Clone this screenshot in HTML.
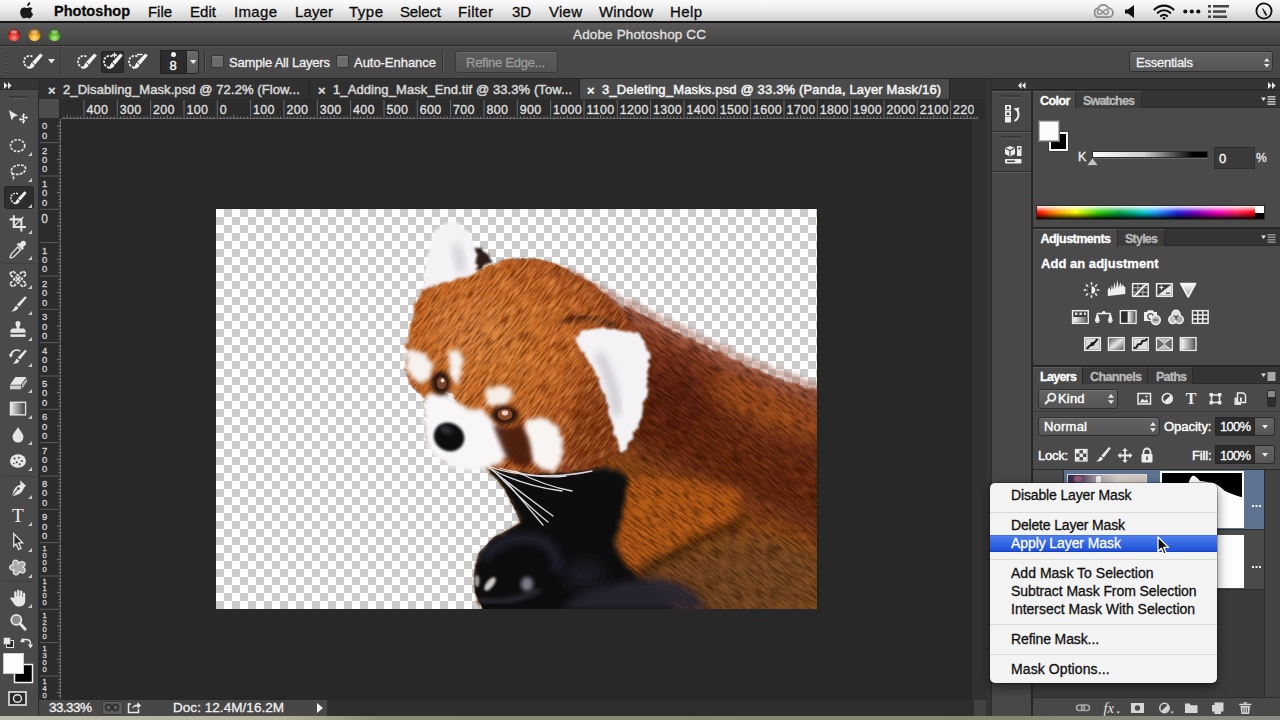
<!DOCTYPE html>
<html lang="en">
<head>
<meta charset="utf-8">
<title>Adobe Photoshop CC</title>
<style>
*{box-sizing:border-box;margin:0;padding:0}
html,body{width:1280px;height:720px;overflow:hidden;background:#282828}
body{font-family:"Liberation Sans","DejaVu Sans",sans-serif;font-size:12px;color:#e8e8e8;position:relative}
.a{position:absolute}
.t{position:absolute;white-space:pre;line-height:1;-webkit-text-stroke-width:.3px}
svg{position:absolute;overflow:visible}
#menubar{left:0;top:0;width:1280px;height:22px;background:linear-gradient(#fbfbfb 0%,#ececec 45%,#d2d2d2 90%,#b4b4b4 100%)}
#menubar .t{color:#0c0c0c}
#titlebar{left:0;top:21px;width:1280px;height:25px;background:linear-gradient(#5a5a5a,#434343);border-top:2px solid #161616;border-bottom:1px solid #2a2a2a}
#optbar{left:0;top:46px;width:1280px;height:33px;background:#484848;border-top:1px solid #565656;border-bottom:1px solid #262626}
#tabbar{left:39px;top:79px;width:947px;height:20px;background:#303030}
#hruler{left:39px;top:99px;width:947px;height:20px;background:#2c2c2c}
#vruler{left:39px;top:119px;width:22px;height:581px;background:#2c2c2c}
#canvas{left:61px;top:119px;width:925px;height:597px;background:#282828}
#statusbar{left:39px;top:700px;width:288px;height:16px;background:#474747}
#toolbar{left:0;top:79px;width:38px;height:637px;background:#4a4a4a}
#rightbg{left:986px;top:79px;width:294px;height:637px;background:#2c2c2c}
#dock{left:992px;top:91px;width:39px;height:625px;background:#484848}
#deskstrip{left:0;top:716px;width:1280px;height:4px;background:linear-gradient(90deg,#bcbcae 0,#b2b29e 22%,#8a8b74 30%,#86876f 75%,#8c8c86 100%)}
.chk{position:absolute;width:13px;height:13px;background:#6b6b6b;border:1px solid #353535;border-radius:2px;box-shadow:inset 0 1px 0 #7c7c7c}
.ptab{position:absolute;height:17px;border-right:1px solid #2a2a2a}
.phead{position:absolute;left:1033px;width:247px;height:17px;background:#343434;border-bottom:1px solid #2a2a2a}
.pbody{position:absolute;left:1033px;width:247px;background:#4a4a4a}
.dd{position:absolute;border:1px solid #2f2f2f;border-radius:3px;background:linear-gradient(#626262,#555);box-shadow:inset 0 1px 0 #727272}
.numbox{position:absolute;background:#2c2c2c;border:1px solid #262626}
.ddbtn{position:absolute;background:linear-gradient(#646464,#565656);border:1px solid #2c2c2c;border-left:none;border-radius:0 3px 3px 0}
</style>
</head>
<body>
<div id="menubar" class="a">
  <svg style="left:20px;top:2px" width="15" height="18" viewBox="0 0 15 18"><path d="M10.3 0.2c.1 1.1-.3 2-.9 2.700-.6.700-1.500 1.200-2.400 1.100-.1-1 .4-2 1-2.600.6-.700 1.600-1.200 2.300-1.200zM12.700 6.300c-.9.600-1.500 1.500-1.500 2.700 0 1.400.800 2.500 2 3-.3.900-.8 1.800-1.400 2.600-.7.900-1.400 1.800-2.500 1.800s-1.400-.6-2.600-.6-1.600.6-2.600.6c-1.100 0-1.900-1-2.600-1.900C.3 12.600-.5 9.400.9 7.200c.7-1.100 1.900-1.800 3.200-1.800 1.100 0 2.100.7 2.800.7.600 0 1.900-.8 3.200-.7 1 .0 2 .4 2.600 1.200z" fill="#1a1a1a"/></svg>
  <span class="t" style="left:54px;top:3.9px;font-size:14.5px;letter-spacing:0.04px;font-weight:bold;">Photoshop</span>
  <span class="t" style="left:148px;top:3.7px;font-size:15px;letter-spacing:-0.06px;">File</span>
  <span class="t" style="left:190px;top:3.7px;font-size:15px;letter-spacing:0.05px;">Edit</span>
  <span class="t" style="left:234px;top:3.7px;font-size:15px;letter-spacing:0.32px;">Image</span>
  <span class="t" style="left:295px;top:3.7px;font-size:15px;letter-spacing:0.12px;">Layer</span>
  <span class="t" style="left:349px;top:3.7px;font-size:15px;letter-spacing:0.49px;">Type</span>
  <span class="t" style="left:400px;top:3.7px;font-size:15px;letter-spacing:-0.14px;">Select</span>
  <span class="t" style="left:458px;top:3.7px;font-size:15px;letter-spacing:0.33px;">Filter</span>
  <span class="t" style="left:512px;top:3.7px;font-size:15px;letter-spacing:-0.19px;">3D</span>
  <span class="t" style="left:549px;top:3.7px;font-size:15px;letter-spacing:0.25px;">View</span>
  <span class="t" style="left:599px;top:3.7px;font-size:15px;letter-spacing:0.13px;">Window</span>
  <span class="t" style="left:670px;top:3.7px;font-size:15px;letter-spacing:0.38px;">Help</span>
  <!-- right status icons -->
  <svg style="left:1093px;top:4px" width="21" height="15" viewBox="0 0 21 15" fill="none" stroke="#8c8c8c"><path d="M5.800 13.200a4.600 4.600 0 0 1-.6-9.100C6.200 1.900 8.200.8 10.400.8c2.300 0 4.200 1.300 5 3.300 2.600.2 4.600 2.200 4.600 4.700 0 2.400-2 4.400-4.500 4.400z" stroke-width="1.700"/><path d="M6.300 10.300a2.400 2.400 0 0 1 0-4.700c1.500 0 2.300.9 3.500 2.300s2.200 2.400 3.700 2.400a2.400 2.400 0 0 0 0-4.700c-1.500 0-2.400.9-3.700 2.400S7.800 10.300 6.300 10.300z" stroke-width="1.500"/></svg>
  <svg style="left:1125px;top:5px" width="10" height="13" viewBox="0 0 10 13"><path d="M0 4.500h3L9 0v13L3 8.500H0z" fill="#111"/></svg>
  <svg style="left:1153px;top:4px" width="22" height="16" viewBox="0 0 22 16" fill="none" stroke="#111" stroke-width="2.200" stroke-linecap="round"><path d="M1.500 5.500a13.500 13.500 0 0 1 19 0"/><path d="M4.800 8.800a8.800 8.800 0 0 1 12.400 0"/><path d="M8 12a4.300 4.300 0 0 1 6 0"/><circle cx="11" cy="14.300" r="0.900" fill="#111" stroke-width="1"/></svg>
  <svg style="left:1183px;top:9px" width="18" height="5" viewBox="0 0 18 5" fill="#111"><circle cx="2.300" cy="2.500" r="2.100"/><circle cx="8.800" cy="2.500" r="2.100"/><circle cx="15.300" cy="2.500" r="2.100"/></svg>
  <svg style="left:1208px;top:4px" width="22" height="15" viewBox="0 0 22 15" fill="#444"><rect x="0" y="1" width="3" height="2.500"/><rect x="5" y="1" width="16" height="2.500"/><rect x="0" y="6.300" width="3" height="2.500"/><rect x="5" y="6.300" width="13" height="2.500"/><rect x="0" y="11.500" width="3" height="2.500"/><rect x="5" y="11.500" width="14" height="2.500"/></svg>
  <svg style="left:1255px;top:2px" width="18" height="18" viewBox="0 0 18 18" fill="none" stroke="#111"><circle cx="9" cy="9" r="7.600" stroke-width="1.800"/><path d="M9 9l2.500 4.500" stroke-width="1.600"/><path d="M9 9L7.500 6.500" stroke-width="1.200"/></svg>
</div>
<div id="titlebar" class="a"></div>
<svg style="left:6px;top:27px" width="60" height="16" viewBox="0 0 60 16">
  <defs>
    <radialGradient id="tlr" cx="50%" cy="75%" r="60%"><stop offset="0" stop-color="#ff8a80"/><stop offset="0.600" stop-color="#e0352b"/><stop offset="1" stop-color="#8e1812"/></radialGradient>
    <radialGradient id="tly" cx="50%" cy="75%" r="60%"><stop offset="0" stop-color="#ffe48a"/><stop offset="0.600" stop-color="#e9a322"/><stop offset="1" stop-color="#94600c"/></radialGradient>
    <radialGradient id="tlg" cx="50%" cy="75%" r="60%"><stop offset="0" stop-color="#b6f08a"/><stop offset="0.600" stop-color="#5bb52e"/><stop offset="1" stop-color="#2c6a12"/></radialGradient>
  </defs>
  <circle cx="8" cy="8" r="6.200" fill="url(#tlr)"/><circle cx="28.500" cy="8" r="6.200" fill="url(#tly)"/><circle cx="48.500" cy="8" r="6.200" fill="url(#tlg)"/>
  <ellipse cx="8" cy="4.800" rx="3.500" ry="1.800" fill="#fff" opacity=".45"/><ellipse cx="28.500" cy="4.800" rx="3.500" ry="1.800" fill="#fff" opacity=".45"/><ellipse cx="48.500" cy="4.800" rx="3.500" ry="1.800" fill="#fff" opacity=".45"/>
</svg>
<span class="t" style="left:573px;top:28.4px;font-size:13.5px;letter-spacing:0.14px;color:#e2e2e2;">Adobe Photoshop CC</span>
<div id="optbar" class="a"></div>
<!-- options bar content -->
<div class="a" style="left:5px;top:52px;width:3px;height:21px;background:repeating-linear-gradient(#3a3a3a 0 1px,#585858 1px 2px)"></div>
<svg style="left:21px;top:51px" width="24" height="22" viewBox="0 0 24 22"><g id="qs"><path d="M11.500 5.500C8 3.800 3 5.800 3 10.500c0 3.500 2.300 5.800 5.200 6" fill="none" stroke="#ececec" stroke-width="1.700" stroke-dasharray="2.400 1.200"/><path d="M19.300 2.600l2.500 2-7.600 8.800-3-2.300z" fill="#f4f4f4"/><path d="M10.600 11.600l3.100 2.400c-.9 2.600-3.600 4.300-7.200 3.700 2-1 2.700-3.700 4.100-6.100z" fill="#f4f4f4"/></g></svg>
<svg style="left:48px;top:59px" width="7" height="5" viewBox="0 0 7 5"><path d="M0 0h7L3.500 4.500z" fill="#e8e8e8"/></svg>
<div class="a" style="left:60px;top:50px;width:2px;height:24px;background:linear-gradient(90deg,#3a3a3a 50%,#525252 50%)"></div>
<svg style="left:75px;top:51px" width="24" height="22" viewBox="0 0 24 22"><use href="#qs"/></svg>
<div class="a" style="left:101px;top:51px;width:23px;height:22px;background:#2d2d2d;border:1px solid #242424;border-radius:2px"></div>
<svg style="left:101px;top:51px" width="24" height="22" viewBox="0 0 24 22"><use href="#qs"/><path d="M13.500 1.500v5M11 4h5" stroke="#f0f0f0" stroke-width="1.300"/></svg>
<svg style="left:126px;top:51px" width="24" height="22" viewBox="0 0 24 22"><use href="#qs"/><path d="M11 3.500h5.500" stroke="#f0f0f0" stroke-width="1.400"/></svg>
<div class="a" style="left:160px;top:50px;width:27px;height:24px;background:#2c2c2c;border:1px solid #222"></div>
<div class="a" style="left:171px;top:52px;width:5px;height:5px;border-radius:3px;background:#f2f2f2"></div>
<span class="t" style="left:169.5px;top:59.1px;font-size:13px;letter-spacing:0.77px;color:#ffffff;">8</span>
<div class="a" style="left:187px;top:50px;width:12px;height:24px;background:linear-gradient(#6a6a6a,#585858);border:1px solid #262626;border-left:none;border-radius:0 3px 3px 0"></div>
<svg style="left:190px;top:60px" width="7" height="5" viewBox="0 0 7 5"><path d="M0 0h6.500L3.250 4z" fill="#ededed"/></svg>
<div class="a" style="left:204px;top:50px;width:2px;height:24px;background:linear-gradient(90deg,#333 50%,#575757 50%)"></div>
<div class="chk" style="left:211px;top:55px"></div>
<span class="t" style="left:229px;top:55.6px;font-size:13px;letter-spacing:-0.19px;color:#f0f0f0;">Sample All Layers</span>
<div class="chk" style="left:336px;top:55px"></div>
<span class="t" style="left:354px;top:55.6px;font-size:13px;letter-spacing:-0.04px;color:#f0f0f0;">Auto-Enhance</span>
<div class="a" style="left:442px;top:50px;width:2px;height:24px;background:linear-gradient(90deg,#333 50%,#575757 50%)"></div>
<div class="a" style="left:455px;top:51px;width:103px;height:22px;background:linear-gradient(#5c5c5c,#525252);border:1px solid #3a3a3a;border-radius:3px;box-shadow:inset 0 1px 0 #6a6a6a"></div>
<span class="t" style="left:466px;top:55.6px;font-size:13px;letter-spacing:-0.26px;color:#9c9c9c;">Refine Edge...</span>
<div class="dd" style="left:1129px;top:51px;width:144px;height:21px"></div>
<span class="t" style="left:1136px;top:55.6px;font-size:13px;letter-spacing:-0.25px;color:#f2f2f2;">Essentials</span>
<svg style="left:1263.500px;top:57.500px" width="5.500" height="9.500" viewBox="0 0 7 12" fill="#e8e8e8"><path d="M3.500 0L7 4.500H0zM3.500 12L0 7.500h7z"/></svg>
<div id="rightbg" class="a"></div>
<div id="tabbar" class="a"></div>
<div class="a" style="left:579px;top:79px;width:371px;height:20px;background:#4a4a4a;border-left:1px solid #262626;border-right:1px solid #262626"></div>
<div class="a" style="left:309px;top:81px;width:1px;height:16px;background:#222"></div>
<span class="t" style="left:48px;top:83.6px;font-size:13px;letter-spacing:0.41px;font-weight:bold;color:#dcdcdc;">×</span><span class="t" style="left:63px;top:83.1px;font-size:13px;letter-spacing:0.09px;color:#d6d6d6;-webkit-text-stroke-width:.5px">2_Disabling_Mask.psd @ 72.2% (Flow...</span>
<span class="t" style="left:318px;top:83.6px;font-size:13px;letter-spacing:0.41px;font-weight:bold;color:#dcdcdc;">×</span><span class="t" style="left:333px;top:83.1px;font-size:13px;letter-spacing:0.09px;color:#d6d6d6;-webkit-text-stroke-width:.5px">1_Adding_Mask_End.tif @ 33.3% (Tow...</span>
<span class="t" style="left:587px;top:83.6px;font-size:13px;letter-spacing:0.41px;font-weight:bold;color:#f4f4f4;">×</span><span class="t" style="left:602px;top:83.1px;font-size:13px;letter-spacing:0.16px;color:#f4f4f4;-webkit-text-stroke-width:.5px">3_Deleting_Masks.psd @ 33.3% (Panda, Layer Mask/16)</span>
<div id="hruler" class="a"></div>
<div id="vruler" class="a"></div>
<div class="a" style="left:39px;top:99px;width:21px;height:20px;background:#4c4c4c;border-right:1px solid #2a2a2a;border-bottom:1px solid #2a2a2a"></div>
<div class="a" style="left:61px;top:118px;width:917px;height:1px;background:#646464"></div><div class="a" style="left:60px;top:119px;width:1px;height:580px;background:#646464"></div>
<svg style="left:0;top:0" width="1280" height="720" viewBox="0 0 1280 720">
<g font-family="'Liberation Sans','DejaVu Sans',sans-serif" font-size="12.5" fill="#dedede" stroke="#dedede" stroke-width=".35" letter-spacing="0.3">
<text x="86.5" y="113.500" clip-path="url(#hclip)">400</text>
<text x="119.8" y="113.500" clip-path="url(#hclip)">300</text>
<text x="153.1" y="113.500" clip-path="url(#hclip)">200</text>
<text x="186.5" y="113.500" clip-path="url(#hclip)">100</text>
<text x="219.8" y="113.500" clip-path="url(#hclip)">0</text>
<text x="253.1" y="113.500" clip-path="url(#hclip)">100</text>
<text x="286.5" y="113.500" clip-path="url(#hclip)">200</text>
<text x="319.8" y="113.500" clip-path="url(#hclip)">300</text>
<text x="353.1" y="113.500" clip-path="url(#hclip)">400</text>
<text x="386.5" y="113.500" clip-path="url(#hclip)">500</text>
<text x="419.8" y="113.500" clip-path="url(#hclip)">600</text>
<text x="453.1" y="113.500" clip-path="url(#hclip)">700</text>
<text x="486.5" y="113.500" clip-path="url(#hclip)">800</text>
<text x="519.8" y="113.500" clip-path="url(#hclip)">900</text>
<text x="553.1" y="113.500" clip-path="url(#hclip)">1000</text>
<text x="586.5" y="113.500" clip-path="url(#hclip)">1100</text>
<text x="619.8" y="113.500" clip-path="url(#hclip)">1200</text>
<text x="653.1" y="113.500" clip-path="url(#hclip)">1300</text>
<text x="686.5" y="113.500" clip-path="url(#hclip)">1400</text>
<text x="719.8" y="113.500" clip-path="url(#hclip)">1500</text>
<text x="753.1" y="113.500" clip-path="url(#hclip)">1600</text>
<text x="786.5" y="113.500" clip-path="url(#hclip)">1700</text>
<text x="819.8" y="113.500" clip-path="url(#hclip)">1800</text>
<text x="853.1" y="113.500" clip-path="url(#hclip)">1900</text>
<text x="886.5" y="113.500" clip-path="url(#hclip)">2000</text>
<text x="919.8" y="113.500" clip-path="url(#hclip)">2100</text>
<text x="953.1" y="113.500" clip-path="url(#hclip)">2200</text>
</g>
<defs><clipPath id="hclip"><rect x="61" y="99" width="912.800" height="20"/></clipPath></defs>
<path d="M84.0 100V119M117.3 100V119M150.6 100V119M184.0 100V119M217.3 100V119M250.6 100V119M284.0 100V119M317.3 100V119M350.6 100V119M384.0 100V119M417.3 100V119M450.6 100V119M484.0 100V119M517.3 100V119M550.6 100V119M584.0 100V119M617.3 100V119M650.6 100V119M684.0 100V119M717.3 100V119M750.6 100V119M784.0 100V119M817.3 100V119M850.6 100V119M884.0 100V119M917.3 100V119M950.6 100V119" stroke="#6a6a6a" stroke-width="1" fill="none"/>
<path d="M64.0 116.5V119M67.3 115.0V119M70.6 116.5V119M74.0 116.5V119M77.3 116.5V119M80.6 116.5V119M87.3 116.5V119M90.6 116.5V119M94.0 116.5V119M97.3 116.5V119M100.6 115.0V119M104.0 116.5V119M107.3 116.5V119M110.6 116.5V119M114.0 116.5V119M120.6 116.5V119M124.0 116.5V119M127.3 116.5V119M130.6 116.5V119M134.0 115.0V119M137.3 116.5V119M140.6 116.5V119M144.0 116.5V119M147.3 116.5V119M154.0 116.5V119M157.3 116.5V119M160.6 116.5V119M164.0 116.5V119M167.3 115.0V119M170.6 116.5V119M174.0 116.5V119M177.3 116.5V119M180.6 116.5V119M187.3 116.5V119M190.6 116.5V119M194.0 116.5V119M197.3 116.5V119M200.6 115.0V119M204.0 116.5V119M207.3 116.5V119M210.6 116.5V119M214.0 116.5V119M220.6 116.5V119M224.0 116.5V119M227.3 116.5V119M230.6 116.5V119M234.0 115.0V119M237.3 116.5V119M240.6 116.5V119M244.0 116.5V119M247.3 116.5V119M254.0 116.5V119M257.3 116.5V119M260.6 116.5V119M264.0 116.5V119M267.3 115.0V119M270.6 116.5V119M274.0 116.5V119M277.3 116.5V119M280.6 116.5V119M287.3 116.5V119M290.6 116.5V119M294.0 116.5V119M297.3 116.5V119M300.6 115.0V119M304.0 116.5V119M307.3 116.5V119M310.6 116.5V119M314.0 116.5V119M320.6 116.5V119M324.0 116.5V119M327.3 116.5V119M330.6 116.5V119M334.0 115.0V119M337.3 116.5V119M340.6 116.5V119M344.0 116.5V119M347.3 116.5V119M354.0 116.5V119M357.3 116.5V119M360.6 116.5V119M364.0 116.5V119M367.3 115.0V119M370.6 116.5V119M374.0 116.5V119M377.3 116.5V119M380.6 116.5V119M387.3 116.5V119M390.6 116.5V119M394.0 116.5V119M397.3 116.5V119M400.6 115.0V119M404.0 116.5V119M407.3 116.5V119M410.6 116.5V119M414.0 116.5V119M420.6 116.5V119M424.0 116.5V119M427.3 116.5V119M430.6 116.5V119M434.0 115.0V119M437.3 116.5V119M440.6 116.5V119M444.0 116.5V119M447.3 116.5V119M454.0 116.5V119M457.3 116.5V119M460.6 116.5V119M464.0 116.5V119M467.3 115.0V119M470.6 116.5V119M474.0 116.5V119M477.3 116.5V119M480.6 116.5V119M487.3 116.5V119M490.6 116.5V119M494.0 116.5V119M497.3 116.5V119M500.6 115.0V119M504.0 116.5V119M507.3 116.5V119M510.6 116.5V119M514.0 116.5V119M520.6 116.5V119M524.0 116.5V119M527.3 116.5V119M530.6 116.5V119M534.0 115.0V119M537.3 116.5V119M540.6 116.5V119M544.0 116.5V119M547.3 116.5V119M554.0 116.5V119M557.3 116.5V119M560.6 116.5V119M564.0 116.5V119M567.3 115.0V119M570.6 116.5V119M574.0 116.5V119M577.3 116.5V119M580.6 116.5V119M587.3 116.5V119M590.6 116.5V119M594.0 116.5V119M597.3 116.5V119M600.6 115.0V119M604.0 116.5V119M607.3 116.5V119M610.6 116.5V119M614.0 116.5V119M620.6 116.5V119M624.0 116.5V119M627.3 116.5V119M630.6 116.5V119M634.0 115.0V119M637.3 116.5V119M640.6 116.5V119M644.0 116.5V119M647.3 116.5V119M654.0 116.5V119M657.3 116.5V119M660.6 116.5V119M664.0 116.5V119M667.3 115.0V119M670.6 116.5V119M674.0 116.5V119M677.3 116.5V119M680.6 116.5V119M687.3 116.5V119M690.6 116.5V119M694.0 116.5V119M697.3 116.5V119M700.6 115.0V119M704.0 116.5V119M707.3 116.5V119M710.6 116.5V119M714.0 116.5V119M720.6 116.5V119M724.0 116.5V119M727.3 116.5V119M730.6 116.5V119M734.0 115.0V119M737.3 116.5V119M740.6 116.5V119M744.0 116.5V119M747.3 116.5V119M754.0 116.5V119M757.3 116.5V119M760.6 116.5V119M764.0 116.5V119M767.3 115.0V119M770.6 116.5V119M774.0 116.5V119M777.3 116.5V119M780.6 116.5V119M787.3 116.5V119M790.6 116.5V119M794.0 116.5V119M797.3 116.5V119M800.6 115.0V119M804.0 116.5V119M807.3 116.5V119M810.6 116.5V119M814.0 116.5V119M820.6 116.5V119M824.0 116.5V119M827.3 116.5V119M830.6 116.5V119M834.0 115.0V119M837.3 116.5V119M840.6 116.5V119M844.0 116.5V119M847.3 116.5V119M854.0 116.5V119M857.3 116.5V119M860.6 116.5V119M864.0 116.5V119M867.3 115.0V119M870.6 116.5V119M874.0 116.5V119M877.3 116.5V119M880.6 116.5V119M887.3 116.5V119M890.6 116.5V119M894.0 116.5V119M897.3 116.5V119M900.6 115.0V119M904.0 116.5V119M907.3 116.5V119M910.6 116.5V119M914.0 116.5V119M920.6 116.5V119M924.0 116.5V119M927.3 116.5V119M930.6 116.5V119M934.0 115.0V119M937.3 116.5V119M940.6 116.5V119M944.0 116.5V119M947.3 116.5V119M954.0 116.5V119M957.3 116.5V119M960.6 116.5V119M964.0 116.5V119M967.3 115.0V119M970.6 116.5V119M974.0 116.5V119M977.3 116.5V119" stroke="#7c7c7c" stroke-width="1" fill="none"/>
<g font-family="'Liberation Sans','DejaVu Sans',sans-serif" font-size="9.500" fill="#d4d4d4" stroke="#d4d4d4" stroke-width=".3" text-anchor="middle">
<text x="44.700" y="153.7" font-size="9.5">2</text>
<text x="44.700" y="163.0" font-size="9.5">0</text>
<text x="44.700" y="172.3" font-size="9.5">0</text>
<text x="44.700" y="187.1" font-size="9.5">1</text>
<text x="44.700" y="196.4" font-size="9.5">0</text>
<text x="44.700" y="205.7" font-size="9.5">0</text>
<text x="44.700" y="223.1" font-size="12">0</text>
<text x="44.700" y="253.7" font-size="9.5">1</text>
<text x="44.700" y="263.0" font-size="9.5">0</text>
<text x="44.700" y="272.3" font-size="9.5">0</text>
<text x="44.700" y="287.1" font-size="9.5">2</text>
<text x="44.700" y="296.4" font-size="9.5">0</text>
<text x="44.700" y="305.7" font-size="9.5">0</text>
<text x="44.700" y="320.4" font-size="9.5">3</text>
<text x="44.700" y="329.7" font-size="9.5">0</text>
<text x="44.700" y="339.0" font-size="9.5">0</text>
<text x="44.700" y="353.7" font-size="9.5">4</text>
<text x="44.700" y="363.0" font-size="9.5">0</text>
<text x="44.700" y="372.3" font-size="9.5">0</text>
<text x="44.700" y="387.1" font-size="9.5">5</text>
<text x="44.700" y="396.4" font-size="9.5">0</text>
<text x="44.700" y="405.7" font-size="9.5">0</text>
<text x="44.700" y="420.4" font-size="9.5">6</text>
<text x="44.700" y="429.7" font-size="9.5">0</text>
<text x="44.700" y="439.0" font-size="9.5">0</text>
<text x="44.700" y="453.7" font-size="9.5">7</text>
<text x="44.700" y="463.0" font-size="9.5">0</text>
<text x="44.700" y="472.3" font-size="9.5">0</text>
<text x="44.700" y="487.1" font-size="9.5">8</text>
<text x="44.700" y="496.4" font-size="9.5">0</text>
<text x="44.700" y="505.7" font-size="9.5">0</text>
<text x="44.700" y="520.4" font-size="9.5">9</text>
<text x="44.700" y="529.7" font-size="9.5">0</text>
<text x="44.700" y="539.0" font-size="9.5">0</text>
<text x="44.700" y="550.8" font-size="7.5">1</text>
<text x="44.700" y="557.8" font-size="7.5">0</text>
<text x="44.700" y="564.8" font-size="7.5">0</text>
<text x="44.700" y="571.8" font-size="7.5">0</text>
<text x="44.700" y="584.1" font-size="7.5">1</text>
<text x="44.700" y="591.1" font-size="7.5">1</text>
<text x="44.700" y="598.1" font-size="7.5">0</text>
<text x="44.700" y="605.1" font-size="7.5">0</text>
<text x="44.700" y="617.5" font-size="7.5">1</text>
<text x="44.700" y="624.5" font-size="7.5">2</text>
<text x="44.700" y="631.5" font-size="7.5">0</text>
<text x="44.700" y="638.5" font-size="7.5">0</text>
<text x="44.700" y="650.8" font-size="7.5">1</text>
<text x="44.700" y="657.8" font-size="7.5">3</text>
<text x="44.700" y="664.8" font-size="7.5">0</text>
<text x="44.700" y="671.8" font-size="7.5">0</text>
<text x="44.700" y="684.1" font-size="7.5">1</text>
<text x="44.700" y="691.1" font-size="7.5">4</text>
<text x="44.700" y="698.1" font-size="7.5">0</text>
<text x="44.700" y="129.1" font-size="9.500">0</text>
<text x="44.700" y="138.6" font-size="9.500">0</text>
</g>
<path d="M40 142.6H61M40 176.0H61M40 209.3H61M40 242.6H61M40 276.0H61M40 309.3H61M40 342.6H61M40 376.0H61M40 409.3H61M40 442.6H61M40 476.0H61M40 509.3H61M40 542.6H61M40 576.0H61M40 609.3H61M40 642.6H61M40 676.0H61" stroke="#5c5c5c" stroke-width="1" fill="none"/>
<path d="M58.5 122.6H61M57.0 126.0H61M58.5 129.3H61M58.5 132.6H61M58.5 136.0H61M58.5 139.3H61M58.5 146.0H61M58.5 149.3H61M58.5 152.6H61M58.5 156.0H61M57.0 159.3H61M58.5 162.6H61M58.5 166.0H61M58.5 169.3H61M58.5 172.6H61M58.5 179.3H61M58.5 182.6H61M58.5 186.0H61M58.5 189.3H61M57.0 192.6H61M58.5 196.0H61M58.5 199.3H61M58.5 202.6H61M58.5 206.0H61M58.5 212.6H61M58.5 216.0H61M58.5 219.3H61M58.5 222.6H61M57.0 226.0H61M58.5 229.3H61M58.5 232.6H61M58.5 236.0H61M58.5 239.3H61M58.5 246.0H61M58.5 249.3H61M58.5 252.6H61M58.5 256.0H61M57.0 259.3H61M58.5 262.6H61M58.5 266.0H61M58.5 269.3H61M58.5 272.6H61M58.5 279.3H61M58.5 282.6H61M58.5 286.0H61M58.5 289.3H61M57.0 292.6H61M58.5 296.0H61M58.5 299.3H61M58.5 302.6H61M58.5 306.0H61M58.5 312.6H61M58.5 316.0H61M58.5 319.3H61M58.5 322.6H61M57.0 326.0H61M58.5 329.3H61M58.5 332.6H61M58.5 336.0H61M58.5 339.3H61M58.5 346.0H61M58.5 349.3H61M58.5 352.6H61M58.5 356.0H61M57.0 359.3H61M58.5 362.6H61M58.5 366.0H61M58.5 369.3H61M58.5 372.6H61M58.5 379.3H61M58.5 382.6H61M58.5 386.0H61M58.5 389.3H61M57.0 392.6H61M58.5 396.0H61M58.5 399.3H61M58.5 402.6H61M58.5 406.0H61M58.5 412.6H61M58.5 416.0H61M58.5 419.3H61M58.5 422.6H61M57.0 426.0H61M58.5 429.3H61M58.5 432.6H61M58.5 436.0H61M58.5 439.3H61M58.5 446.0H61M58.5 449.3H61M58.5 452.6H61M58.5 456.0H61M57.0 459.3H61M58.5 462.6H61M58.5 466.0H61M58.5 469.3H61M58.5 472.6H61M58.5 479.3H61M58.5 482.6H61M58.5 486.0H61M58.5 489.3H61M57.0 492.6H61M58.5 496.0H61M58.5 499.3H61M58.5 502.6H61M58.5 506.0H61M58.5 512.6H61M58.5 516.0H61M58.5 519.3H61M58.5 522.6H61M57.0 526.0H61M58.5 529.3H61M58.5 532.6H61M58.5 536.0H61M58.5 539.3H61M58.5 546.0H61M58.5 549.3H61M58.5 552.6H61M58.5 556.0H61M57.0 559.3H61M58.5 562.6H61M58.5 566.0H61M58.5 569.3H61M58.5 572.6H61M58.5 579.3H61M58.5 582.6H61M58.5 586.0H61M58.5 589.3H61M57.0 592.6H61M58.5 596.0H61M58.5 599.3H61M58.5 602.6H61M58.5 606.0H61M58.5 612.6H61M58.5 616.0H61M58.5 619.3H61M58.5 622.6H61M57.0 626.0H61M58.5 629.3H61M58.5 632.6H61M58.5 636.0H61M58.5 639.3H61M58.5 646.0H61M58.5 649.3H61M58.5 652.6H61M58.5 656.0H61M57.0 659.3H61M58.5 662.6H61M58.5 666.0H61M58.5 669.3H61M58.5 672.6H61M58.5 679.3H61M58.5 682.6H61M58.5 686.0H61M58.5 689.3H61M57.0 692.6H61M58.5 696.0H61" stroke="#7c7c7c" stroke-width="1" fill="none"/>
</svg>
<div id="canvas" class="a"></div>
<div class="a" style="left:972px;top:119px;width:14px;height:581px;background:#313131"></div><div class="a" style="left:327px;top:700px;width:647px;height:16px;background:#2e2e2e"></div><div class="a" style="left:974px;top:700px;width:12px;height:16px;background:#424242"></div>
<svg id="img" style="left:216px;top:209px;overflow:hidden" width="601" height="400" viewBox="216 209 601 400">
<defs>
<pattern id="chk" x="216" y="209" width="16" height="16" patternUnits="userSpaceOnUse"><rect width="16" height="16" fill="#fefefe"/><rect x="8" width="8" height="8" fill="#cbcbcb"/><rect y="8" width="8" height="8" fill="#cbcbcb"/></pattern>
<filter id="fur" x="-5%" y="-5%" width="110%" height="110%"><feTurbulence type="fractalNoise" baseFrequency="0.11" numOctaves="2" seed="7" result="n"/><feDisplacementMap in="SourceGraphic" in2="n" scale="8" xChannelSelector="R" yChannelSelector="G"/><feGaussianBlur stdDeviation="0.8"/></filter>
<filter id="fur2" x="-10%" y="-10%" width="120%" height="120%"><feTurbulence type="fractalNoise" baseFrequency="0.14" numOctaves="2" seed="3" result="n"/><feDisplacementMap in="SourceGraphic" in2="n" scale="8" xChannelSelector="R" yChannelSelector="G"/><feGaussianBlur stdDeviation="1.9"/></filter>
<filter id="b1" x="-20%" y="-20%" width="140%" height="140%"><feGaussianBlur stdDeviation="1"/></filter>
<filter id="b2" x="-20%" y="-20%" width="140%" height="140%"><feGaussianBlur stdDeviation="2"/></filter>
<filter id="b4" x="-30%" y="-30%" width="160%" height="160%"><feGaussianBlur stdDeviation="4"/></filter>
<filter id="b8" x="-40%" y="-40%" width="180%" height="180%"><feGaussianBlur stdDeviation="8"/></filter>
<filter id="b14" x="-50%" y="-50%" width="200%" height="200%"><feGaussianBlur stdDeviation="14"/></filter>
<filter id="tex" x="0" y="0" width="100%" height="100%"><feTurbulence type="fractalNoise" baseFrequency="0.07 0.5" numOctaves="3" seed="11" result="n"/><feColorMatrix in="n" type="matrix" values="0 0 0 0 0  0 0 0 0 0  0 0 0 0 0  3 0 0 0 -1.25" result="a"/><feComposite in="SourceGraphic" in2="a" operator="in"/></filter>
<filter id="tex2" x="0" y="0" width="100%" height="100%"><feTurbulence type="fractalNoise" baseFrequency="0.07 0.5" numOctaves="3" seed="29" result="n"/><feColorMatrix in="n" type="matrix" values="0 0 0 0 0  0 0 0 0 0  0 0 0 0 0  3 0 0 0 -1.25" result="a"/><feComposite in="SourceGraphic" in2="a" operator="in"/></filter>
<linearGradient id="bodyg" gradientUnits="userSpaceOnUse" x1="700" y1="340" x2="573" y2="612"><stop offset="0" stop-color="#96503a"/><stop offset="0.07" stop-color="#8a4024"/><stop offset="0.18" stop-color="#662a12"/><stop offset="0.36" stop-color="#5e2610"/><stop offset="0.47" stop-color="#884618"/><stop offset="0.6" stop-color="#85501e"/><stop offset="0.8" stop-color="#6a4222"/><stop offset="1" stop-color="#5a3a22"/></linearGradient>
<radialGradient id="headg" gradientUnits="userSpaceOnUse" cx="490" cy="345" r="150"><stop offset="0" stop-color="#d27a30"/><stop offset="0.5" stop-color="#c46524"/><stop offset="0.72" stop-color="#a8501e"/><stop offset="1" stop-color="#883c20"/></radialGradient>
<clipPath id="pclip"><path d="M424 287C428 270 429 250 433 236 438 222 452 220 462 228 472 238 478 255 477 272 488 264 508 258 529 258 545 259 563 266 590 284L617 302 672 330 728 357 772 376 817 391V609H483L475 593 474 572 479 552 494 537 521 523 514 508 504 488 487 469 479 467 443 462 425 442 423 398 412 387 404 370 407 348 412 320z"/></clipPath>
<clipPath id="hclip2"><path d="M421 289C440 278 460 272 478 272 490 264 508 258 529 258 548 259 566 268 592 285 612 298 630 318 640 345 648 380 640 420 618 450 606 464 590 470 566 472 540 476 500 472 487 469L470 440 452 392 425 398 412 387 406 370 407 348 412 320z"/></clipPath>
</defs>
<rect x="216" y="209" width="601" height="400" fill="url(#chk)"/>
<g filter="url(#fur2)" opacity=".55"><path d="M560 268L590 283 617 298 672 325 728 352 772 371 820 388" stroke="#a86a58" stroke-width="7" fill="none"/></g>
<g filter="url(#fur)"><path d="M500 262C510 259 520 258 529 258 545 259 563 266 590 284L617 302 672 330 728 357 772 376 825 393V615H483L475 593 474 572 479 552 494 537 521 523 514 508 504 488 487 469 470 440 480 300z" fill="url(#bodyg)"/></g>
<g clip-path="url(#pclip)">
<ellipse cx="765" cy="408" rx="62" ry="20" transform="rotate(24 765 408)" fill="#b45c1e" opacity=".6" filter="url(#b8)"/>
<path d="M560 274L590 290 617 307 672 335 728 362 772 381 817 396" stroke="#b0705a" stroke-width="9" fill="none" opacity=".6" filter="url(#b4)"/>
<ellipse cx="676" cy="395" rx="28" ry="40" fill="#4a180a" opacity=".6" filter="url(#b14)"/>
<path d="M622 480C660 474 700 482 740 488 742 505 740 515 735 522 700 540 660 558 628 574 612 548 616 510 622 480z" fill="#b85c18" opacity=".9" filter="url(#b4)"/>
<path d="M640 572C670 556 710 536 745 518" stroke="#241206" stroke-width="7" fill="none" opacity=".8" filter="url(#b4)"/>
<path d="M630 609C640 585 690 560 745 535 780 540 800 548 817 550V609z" fill="#6e4624" opacity=".8" filter="url(#b8)"/>
<path d="M540 609C580 585 640 572 690 590 700 598 705 604 705 609z" fill="#2c2a36" opacity=".9" filter="url(#b4)"/>
<g transform="rotate(38 640 450)"><rect x="380" y="150" width="560" height="600" fill="#220a04" filter="url(#tex)" opacity=".55"/><rect x="380" y="150" width="560" height="600" fill="#c8703a" filter="url(#tex2)" opacity=".22"/></g>
</g>
<g clip-path="url(#pclip)">
<g filter="url(#fur2)"><path d="M483 462C510 472 560 476 600 468 615 468 626 472 628 480 626 500 622 520 614 545 622 560 630 575 650 585L680 615H480L473 590 474 570 480 552 495 537 521 523 514 508 503 488z" fill="#0a0a10"/></g>
<path d="M560 609C580 590 620 578 660 580 690 584 700 600 700 609z" fill="#2a2630" opacity=".9" filter="url(#b4)"/>
<path d="M482 560C495 542 515 534 540 540 555 548 560 560 556 572" stroke="#26263a" stroke-width="10" fill="none" opacity=".8" filter="url(#b4)"/>
<ellipse cx="585" cy="575" rx="22" ry="14" fill="#20202e" opacity=".7" filter="url(#b8)"/>
<path d="M478 600C500 604 520 600 540 590" stroke="#3a3444" stroke-width="5" fill="none" opacity=".7" filter="url(#b2)"/>
</g>
<ellipse cx="490" cy="584" rx="3.500" ry="8" transform="rotate(38 490 584)" fill="#dcd8d4" filter="url(#b1)" opacity=".95"/>
<ellipse cx="527" cy="584" rx="6" ry="7" fill="#9490a0" filter="url(#b2)" opacity=".85"/>
<ellipse cx="477" cy="581" rx="2.500" ry="6" fill="#c8c4c8" filter="url(#b1)" opacity=".8"/>
<g filter="url(#fur)"><path d="M421 289C440 278 460 272 478 272 490 264 508 258 529 258 548 259 566 268 592 285 612 298 630 318 640 345 648 380 640 420 618 450 606 464 590 470 566 472 540 476 500 472 487 469L470 440 452 392 425 398 412 387 406 370 407 348 412 320z" fill="url(#headg)"/>
<path d="M470 250C478 244 488 250 492 262 486 266 478 270 472 272z" fill="#2a1a18"/></g>
<g clip-path="url(#hclip2)">
<ellipse cx="606" cy="420" rx="30" ry="55" transform="rotate(20 606 420)" fill="#7a3010" opacity=".85" filter="url(#b8)"/>
<ellipse cx="470" cy="330" rx="40" ry="30" fill="#da8444" opacity=".5" filter="url(#b8)"/>
<path d="M562 322C580 314 600 318 618 328" stroke="#2e1810" stroke-width="5" fill="none" opacity=".85" filter="url(#b2)"/>
<g transform="rotate(-52 520 370)"><rect x="330" y="200" width="400" height="360" fill="#4a1804" filter="url(#tex)" opacity=".6"/><rect x="330" y="200" width="400" height="360" fill="#ffb870" filter="url(#tex2)" opacity=".4"/></g>
</g>
<g filter="url(#fur)"><path d="M422 289C425 270 427 250 432 236 438 221 453 219 463 227 473 238 479 255 478 275 462 277 440 283 422 289z" fill="#f5f3f5"/></g>
<ellipse cx="459" cy="258" rx="5" ry="16" transform="rotate(-12 459 258)" fill="#b0acb8" opacity=".5" filter="url(#b4)"/>
<g filter="url(#fur)"><path d="M574 337C586 328 612 325 640 336 651 350 651 372 647 392 642 418 633 440 622 453 616 440 611 420 607 404 601 384 590 360 574 337z" fill="#f4f2f4"/></g>
<path d="M598 354C610 372 615 392 617 415" stroke="#8e8a98" stroke-width="7" fill="none" opacity=".5" filter="url(#b4)"/>
<g filter="url(#fur2)">
<path d="M425 396C432 390 442 392 450 398 460 406 474 408 488 414 498 424 504 438 510 452 506 464 492 470 474 470 456 470 442 464 432 454 424 440 422 418 425 396z" fill="#f8f6f6"/>
<path d="M406 352C416 347 428 352 432 364 434 376 429 383 420 382 410 380 404 368 406 352z" fill="#f6f2f0"/>
<path d="M450 350C456 346 462 351 463 362 464 373 461 383 455 385 449 381 448 364 450 350z" fill="#f8f2ec"/>
<path d="M485 391C493 384 505 384 513 391 512 401 503 406 494 406 488 404 484 398 485 391z" fill="#f6eee6"/>
<path d="M526 420C538 414 554 418 560 432 565 446 564 462 557 470 546 473 535 468 531 457 527 446 524 432 526 420z" fill="#f8f4f2"/>
</g>
<path d="M493 424C502 430 514 428 521 424 529 436 533 452 531 465 520 467 508 463 504 452 500 442 496 434 493 424z" fill="#461a0c" opacity=".92" filter="url(#b2)"/>
<ellipse cx="440.500" cy="383" rx="9.500" ry="12" fill="#2a1410" filter="url(#b2)"/>
<ellipse cx="441.500" cy="383" rx="4.800" ry="6.200" fill="#7a4632"/><circle cx="442.500" cy="380.500" r="1.900" fill="#ead8d0"/>
<ellipse cx="505" cy="415" rx="13.500" ry="9.500" fill="#2a1410" filter="url(#b2)"/>
<ellipse cx="505" cy="414.500" rx="7.500" ry="5.800" fill="#8a4a2c"/><ellipse cx="505" cy="413" rx="3.200" ry="2.400" fill="#ead2c2"/>
<ellipse cx="449" cy="437" rx="15.500" ry="14" transform="rotate(28 449 437)" fill="#0c0c10" filter="url(#b1)"/>
<ellipse cx="446" cy="430" rx="7" ry="3.200" transform="rotate(22 446 430)" fill="#3c3e4c" opacity=".85" filter="url(#b2)"/>
<g fill="none" stroke="#eeedf2" stroke-width="1.300" opacity=".92" stroke-linecap="round"><path d="M487 466C520 478 560 478 592 471"/><path d="M489 468C515 482 540 488 562 491"/><path d="M492 470C515 488 535 503 553 516"/><path d="M497 474C515 492 530 508 548 522"/><path d="M505 480C520 498 532 512 543 525"/><path d="M515 471C535 481 555 488 572 491"/><path d="M500 468C530 477 548 478 566 476"/><path d="M482 464C470 470 462 474 455 482" stroke-width=".8" opacity=".6"/></g>
</svg>
<div class="a" style="left:817px;top:209px;width:2px;height:401px;background:#22261a"></div>
<div id="statusbar" class="a"></div>
<span class="t" style="left:49px;top:701.4px;font-size:13.5px;letter-spacing:-0.56px;color:#f0f0f0;">33.33%</span>
<div class="a" style="left:102px;top:701px;width:21px;height:14px;background:#5c5c5c;border:1px solid #3a3a3a"></div>
<svg style="left:104px;top:703px" width="17" height="9" viewBox="0 0 17 9" fill="none" stroke="#2b2b2b" stroke-width="1.500"><circle cx="4.500" cy="4.500" r="3"/><circle cx="11.500" cy="4.500" r="3"/><path d="M8 2l2 5" stroke-width="1"/></svg>
<svg style="left:127px;top:700px" width="15" height="14" viewBox="0 0 15 14" fill="none" stroke="#e8e8e8" stroke-width="1.500"><path d="M4 4H1.500v8.500h10V9"/><path d="M5 9c.5-3 2.500-4.500 5.500-4.500V2L14 5.500 10.500 9V6.500C8 6.500 6.500 7 5 9z" fill="#e8e8e8" stroke="none"/></svg>
<span class="t" style="left:173px;top:701.4px;font-size:13.5px;letter-spacing:0.05px;color:#f0f0f0;">Doc: 12.4M/16.2M</span>
<svg style="left:317px;top:703px" width="6" height="10" viewBox="0 0 6 10"><path d="M0 0l6 5-6 5z" fill="#f2f2f2"/></svg>
<div id="deskstrip" class="a"></div>
<div id="toolbar" class="a"></div>
<div class="a" style="left:0;top:79px;width:38px;height:11px;background:#353535;border-bottom:1px solid #2a2a2a"></div>
<svg style="left:4px;top:82px" width="8" height="7" viewBox="0 0 8 7" fill="#e8e8e8"><path d="M0 0l3.500 3.500L0 7zM4 0l3.500 3.500L4 7z"/></svg>
<div class="a" style="left:9px;top:96px;width:19px;height:3px;background:#3a3a3a;border-bottom:1px solid #595959"></div>
<div class="a" style="left:38px;top:79px;width:1px;height:637px;background:#2a2a2a"></div>
<div class="a" style="left:3px;top:263px;width:32px;height:1px;background:#3e3e3e"></div>
<div class="a" style="left:3px;top:476px;width:32px;height:1px;background:#3e3e3e"></div>
<div class="a" style="left:3px;top:581px;width:32px;height:1px;background:#3e3e3e"></div>
<div class="a" style="left:4px;top:186px;width:30px;height:23px;background:#2e2e2e;border:1px solid #262626;border-radius:3px"></div>
<svg style="left:0;top:0" width="40" height="720" viewBox="0 0 40 720" fill="#e6e6e6" stroke="none">
  <defs><path id="tri" d="M0 4L4 0V4z" fill="#c8c8c8"/></defs>
  <!-- move -->
  <g transform="translate(6,106)"><g transform="translate(12 12) scale(.84) translate(-12 -12)"><path d="M1 2.500l11 6.500-5 1.500-2.500 4.500z"/><path d="M17.500 8l2.300 2.800h-1.500v2h2v-1.500l2.700 2.200-2.700 2.300v-1.500h-2v2h1.500L17.500 21l-2.300-2.700h1.500v-2h-2v1.500L12 15.500l2.700-2.200v1.500h2v-2h-1.500z" transform="translate(1,-2)"/></g></g>
  <!-- ellipse marquee -->
  <g transform="translate(6,134)"><g transform="translate(12 12) scale(.84) translate(-12 -12)"><ellipse cx="11.500" cy="11.500" rx="8.500" ry="7" fill="none" stroke="#e6e6e6" stroke-width="2" stroke-dasharray="3 1.600"/></g><use href="#tri" x="22" y="18"/></g>
  <!-- lasso -->
  <g transform="translate(6,160)"><g transform="translate(12 12) scale(.84) translate(-12 -12)"><path d="M6 14.500C2.500 12 3.500 6.500 9.500 4.500s12-.5 11.500 4-7 7.500-13 6c-2.500-.600-3.500 1.500-2 3s1 3-.5 4.500" fill="none" stroke="#e6e6e6" stroke-width="2" stroke-dasharray="3.500 1.300"/></g><use href="#tri" x="22" y="18"/></g>
  <!-- quick select -->
  <g transform="translate(6,186)"><g transform="translate(12 12) scale(.84) translate(-12 -12)"><path d="M12 7C8.500 5.300 3.500 7.300 3.500 12c0 3.500 2.300 5.800 5.200 6" fill="none" stroke="#ececec" stroke-width="1.700" stroke-dasharray="2.400 1.200"/><path d="M19.800 4.100l2.500 2-7.600 8.800-3-2.300z" fill="#f4f4f4"/><path d="M11.100 13.100l3.100 2.400c-.9 2.600-3.600 4.300-7.200 3.700 2-1 2.700-3.700 4.100-6.100z" fill="#f4f4f4"/></g><use href="#tri" x="22" y="18"/></g>
  <!-- crop -->
  <g transform="translate(6,212)" fill="none" stroke="#e6e6e6" stroke-width="2.400"><g transform="translate(12 12) scale(.84) translate(-12 -12)"><path d="M7 1.500v14h14.500M2 6.500h14v14.500"/><path d="M18.500 3.500L6 16" stroke-width="1.500"/></g><use href="#tri" x="22" y="18" stroke="none"/></g>
  <!-- eyedropper -->
  <g transform="translate(6,238)"><g transform="translate(12 12) scale(.84) translate(-12 -12)"><path d="M16 2c1.500-1.500 4-1 5 .5s.5 3.500-1 4.500l-2 1.500 1 1.500-2 2-6.500-6.500 2-2 1.500 1z"/><path d="M11.500 8.500l3.500 3.500-8 8-3.500 1.500-1-1L4 17z" fill="none" stroke="#e6e6e6" stroke-width="1.500"/></g><use href="#tri" x="22" y="18"/></g>
  <!-- patch/healing -->
  <g transform="translate(6,267)"><g transform="translate(12 12) scale(.84) translate(-12 -12)"><path d="M2 6l4-3.500 6 5.500 6-5.500 4 3.500-6 6 6 6-4 3.500-6-5.500-6 5.500-4-3.500 6-6z" fill="none" stroke="#e6e6e6" stroke-width="2" stroke-dasharray="4 1.500"/><path d="M9 9l6 6M15 9l-6 6" stroke="#e6e6e6" stroke-width="2"/></g><use href="#tri" x="22" y="18"/></g>
  <!-- brush -->
  <g transform="translate(6,293)"><g transform="translate(12 12) scale(.84) translate(-12 -12)"><path d="M20.500 1.500l2 1.500-9 11-3-2.300z"/><path d="M9.500 12.800l3 2.300c-1 3-4 5-8.500 4.500 2.500-1.300 3.500-4 5.500-6.800z"/></g><use href="#tri" x="22" y="18"/></g>
  <!-- stamp -->
  <g transform="translate(6,319)"><g transform="translate(12 12) scale(.84) translate(-12 -12)"><path d="M9 3a3 3 0 0 1 6 0c0 2-1.500 3-1.500 6H19l2 2v3H3v-3l2-2h5.500C10.500 6 9 5 9 3z"/><rect x="3" y="16" width="18" height="3"/></g><use href="#tri" x="22" y="18"/></g>
  <!-- history brush -->
  <g transform="translate(6,345)"><g transform="translate(12 12) scale(.84) translate(-12 -12)"><path d="M20.500 3.500l2 1.500-8 10-3-2.300z"/><path d="M10.500 13.800l3 2.300c-1 2.800-3.500 4.400-7.500 3.900 2-1.200 3-3.600 4.500-6.200z"/><path d="M3.500 11a7 7 0 0 1 11-6" fill="none" stroke="#e6e6e6" stroke-width="2"/><path d="M1 8.500l5.500.5-3.500 4z"/></g><use href="#tri" x="22" y="18"/></g>
  <!-- eraser -->
  <g transform="translate(6,371)"><g transform="translate(12 12) scale(.84) translate(-12 -12)"><path d="M9 5h13l-6.500 9H2.500z"/><path d="M2.500 15h13v4.500h-13z" opacity=".85"/><path d="M16.500 14.500L22.500 6v4.500l-6 8.500z" opacity=".7"/></g><use href="#tri" x="22" y="18"/></g>
  <!-- gradient -->
  <g transform="translate(6,397)"><g transform="translate(12 12) scale(.84) translate(-12 -12)"><defs><linearGradient id="gr1"><stop offset="0" stop-color="#f0f0f0"/><stop offset="1" stop-color="#3a3a3a"/></linearGradient></defs><rect x="3" y="4" width="18" height="15" fill="url(#gr1)" stroke="#e6e6e6" stroke-width="1.600"/></g><use href="#tri" x="22" y="18"/></g>
  <!-- blur drop -->
  <g transform="translate(6,423)"><g transform="translate(12 12) scale(.84) translate(-12 -12)"><path d="M12 2.500c2.500 4.500 6.500 8 6.500 12a6.500 6.500 0 0 1-13 0c0-4 4-7.500 6.500-12z"/></g><use href="#tri" x="22" y="18"/></g>
  <!-- sponge -->
  <g transform="translate(6,449)"><g transform="translate(12 12) scale(.84) translate(-12 -12)"><ellipse cx="12" cy="12" rx="9.500" ry="8"/><g fill="#4a4a4a"><circle cx="8" cy="9" r="1.300"/><circle cx="13" cy="8" r="1.200"/><circle cx="16.500" cy="12" r="1.300"/><circle cx="10.500" cy="13.500" r="1.300"/><circle cx="14" cy="16" r="1.200"/><circle cx="7" cy="15" r="1"/></g></g><use href="#tri" x="22" y="18"/></g>
  <!-- pen -->
  <g transform="translate(6,477)"><g transform="translate(12 12) scale(.84) translate(-12 -12)"><path d="M14.500 1.500l7 6.500-2.500 2.500c-1 4-3.500 7-8.500 8.500l-6 2 2-6c1.500-5 4.500-7.500 8.500-8.500z"/><circle cx="12.500" cy="11.500" r="1.700" fill="#4a4a4a"/><path d="M4.500 21l7-8.500" stroke="#4a4a4a" stroke-width="1.200"/></g><use href="#tri" x="22" y="18"/></g>
  <!-- type: real text T -->
  <g transform="translate(6,504)"><g transform="translate(12 12) scale(.84) translate(-12 -12)"><text x="12" y="19.500" text-anchor="middle" font-family="'Liberation Serif','DejaVu Serif',serif" font-size="23" fill="#ececec">T</text></g><use href="#tri" x="22" y="18"/></g>
  <!-- path select -->
  <g transform="translate(6,530)"><g transform="translate(12 12) scale(.84) translate(-12 -12)"><path d="M7 2l10.500 11h-5l3 6.500-2.800 1.300-3-6.500L7 17z" fill="#2a2a2a" stroke="#e6e6e6" stroke-width="1.600"/></g><use href="#tri" x="22" y="18"/></g>
  <!-- custom shape -->
  <g transform="translate(6,556)"><g transform="translate(12 12) scale(.84) translate(-12 -12)"><path d="M8 3c2.500-1 4.500 1 4.500 3.500 1.500-2.500 6-3 7.500-.5s-.5 4.500-3 5c3 .5 4.500 3 3 5.500s-5.500 1.500-6.500-1c0 3-2 5.500-5 4.500s-2.500-4-.500-6c-2.500 1-5.500.500-6-2s2-4.500 5-3.500C5 7 5.500 4 8 3z" fill="#aaaaaa" stroke="#e6e6e6" stroke-width="1.500"/></g><use href="#tri" x="22" y="18"/></g>
  <!-- hand -->
  <g transform="translate(6,586)"><g transform="translate(12 12) scale(.84) translate(-12 -12)"><path d="M7.500 12V5.500a1.400 1.400 0 0 1 2.800 0V10h.7V3.500a1.400 1.400 0 0 1 2.800 0V10h.7V4.500a1.400 1.400 0 0 1 2.800 0V11h.7V7a1.300 1.300 0 0 1 2.600 0v8c0 4-2.500 7-6.500 7h-1.500c-3 0-4.500-1.500-6-4L3 13c-.7-1.300.8-2.500 2-1.500z"/></g><use href="#tri" x="22" y="18"/></g>
  <!-- zoom -->
  <g transform="translate(6,610)"><g transform="translate(12 12) scale(.84) translate(-12 -12)"><circle cx="10" cy="9.500" r="6" fill="#8c8c8c" stroke="#e6e6e6" stroke-width="2.200"/><path d="M14.500 14l6 6.500" stroke="#e6e6e6" stroke-width="3.500" stroke-linecap="round"/></g></g>
  <!-- default colors -->
  <g transform="translate(3,637)"><rect x="3.500" y="3.500" width="7" height="7" fill="#222" stroke="#e6e6e6"/><rect x="0.500" y="0.500" width="7" height="7" fill="#e6e6e6" stroke="#4a4a4a" stroke-width=".5"/></g>
  <!-- swap -->
  <g transform="translate(20,636)" fill="none" stroke="#e6e6e6" stroke-width="1.500"><path d="M2.500 6.500V3.500h3.500c3 0 4.500 1.500 4.500 4.500v2"/><path d="M0 6l2.500-4L5 6zM8 8.500l2.500 4L13 8.500z" fill="#e6e6e6" stroke="none"/></g>
  <!-- fg / bg swatches -->
  <rect x="14.500" y="664.500" width="18" height="18" fill="#000" stroke="#f2f2f2" stroke-width="1.500"/>
  <rect x="3.500" y="653.500" width="20" height="20" fill="#fdfdfd" stroke="#cfcfcf" stroke-width="1"/>
  <!-- quick mask -->
  <g transform="translate(8,691)"><rect x="1" y="1" width="17" height="13" fill="#2a2a2a" stroke="#e6e6e6" stroke-width="1.600"/><ellipse cx="9.500" cy="7.500" rx="4" ry="3.800" fill="none" stroke="#e6e6e6" stroke-width="1.400"/></g>
</svg>
<div class="a" style="left:986px;top:79px;width:5px;height:637px;background:#343434"></div>
<!-- dock header band -->
<div class="a" style="left:992px;top:79px;width:288px;height:11px;background:#353535;border-bottom:1px solid #262626"></div>
<svg style="left:1018px;top:82px" width="8" height="7" viewBox="0 0 8 7" fill="#ececec"><path d="M3.500 0L0 3.500 3.500 7zM7.500 0L4 3.500 7.500 7z"/></svg>
<svg style="left:1268px;top:82px" width="8" height="7" viewBox="0 0 8 7" fill="#ececec"><path d="M0 0l3.500 3.500L0 7zM4 0l3.500 3.500L4 7z"/></svg>
<div id="dock" class="a"></div>
<div class="a" style="left:992px;top:91px;width:39px;height:1px;background:#5c5c5c"></div>
<div class="a" style="left:1001px;top:95px;width:20px;height:3px;background:#3a3a3a;border-bottom:1px solid #595959"></div>
<div class="a" style="left:992px;top:131px;width:39px;height:2px;background:#2e2e2e;border-bottom:1px solid #5a5a5a"></div>
<div class="a" style="left:1001px;top:136px;width:20px;height:3px;background:#3a3a3a;border-bottom:1px solid #595959"></div>
<div class="a" style="left:992px;top:171px;width:39px;height:2px;background:#2e2e2e;border-bottom:1px solid #5a5a5a"></div>
<div class="a" style="left:1031px;top:91px;width:2px;height:625px;background:#262626"></div>
<!-- history icon -->
<svg style="left:1004px;top:104px" width="20" height="20" viewBox="0 0 20 20" fill="#ececec"><rect x="1" y="1" width="6" height="5.500"/><rect x="1" y="7" width="6" height="5.500"/><rect x="1" y="13" width="6" height="5.500"/><rect x="2.800" y="2.600" width="2.400" height="2.400" fill="#3a3a3a"/><rect x="2.800" y="8.600" width="2.400" height="2.400" fill="#3a3a3a"/><path d="M10.500 17c4-2.500 5-7 2.500-12" fill="none" stroke="#ececec" stroke-width="2"/><path d="M9.500 4.500l6-1-1.500 5z"/></svg>
<!-- properties icon -->
<svg style="left:1004px;top:145px" width="20" height="20" viewBox="0 0 20 20" fill="#ececec"><path d="M6 1l5 2v6l-5 2.500L1 9V3z"/><path d="M6 5.500V11M1.500 3.200L6 5.500l4.500-2.300" stroke="#484848" stroke-width="1.200" fill="none"/><rect x="13" y="1" width="4.500" height="10"/><rect x="14.300" y="2.500" width="2" height="2" fill="#484848"/><rect x="1" y="14" width="16.500" height="4.500" rx="1"/><rect x="3" y="15.500" width="8" height="1.500" fill="#484848"/></svg>

<!-- ===== Color panel ===== -->
<div class="phead" style="top:91px"></div>
<div class="pbody" style="top:108px;height:119px"></div>
<div class="ptab" style="left:1033px;top:91px;width:43px;background:#4a4a4a;height:18px;border-top:1px solid #5c5c5c"></div>
<div class="ptab" style="left:1076px;top:91px;width:66px;background:#3c3c3c;border-top:1px solid #4c4c4c"></div>
<span class="t" style="left:1040px;top:95.2px;font-size:12.5px;letter-spacing:-0.54px;font-weight:bold;color:#ffffff;">Color</span>
<span class="t" style="left:1083px;top:95.2px;font-size:12.5px;letter-spacing:-0.81px;font-weight:bold;color:#b9b9b9;">Swatches</span>
<svg class="pm" style="left:1261px;top:96px" width="15" height="9" viewBox="0 0 15 9"><path d="M0 1.500h5L2.500 5z" fill="#e2e2e2"/><path d="M6.500 0h8v1.500h-8zM6.500 2.500h8V4h-8zM6.500 5h8v1.500h-8zM6.500 7.500h8V9h-8z" fill="#bdbdbd"/></svg>
<div class="a" style="left:1049px;top:132px;width:19px;height:19px;background:#000;border:2px solid #f4f4f4;box-shadow:0 0 0 1px #3a3a3a"></div>
<div class="a" style="left:1039px;top:121px;width:20px;height:20px;background:#fcfcfc;border:1px solid #b0b0b0;box-shadow:0 0 0 1px #6a6a6a"></div>
<span class="t" style="left:1078px;top:151.4px;font-size:12.5px;letter-spacing:-0.34px;color:#f4f4f4;">K</span>
<div class="a" style="left:1092px;top:151px;width:116px;height:7px;background:linear-gradient(90deg,#ffffff,#d0d0d0 45%,#000 88%,#000);border:1px solid #2c2c2c;box-shadow:0 1px 0 #6a6a6a"></div>
<svg style="left:1087px;top:158px" width="11" height="8" viewBox="0 0 11 8"><path d="M5.500 0L10.500 6.500v1H.5v-1z" fill="#c4c4c4" stroke="#3a3a3a" stroke-width=".6"/></svg>
<div class="numbox" style="left:1214px;top:147px;width:41px;height:22px;background:#3a3a3a;border-color:#2e2e2e"></div>
<span class="t" style="left:1219px;top:151.6px;font-size:13px;letter-spacing:0.77px;color:#ffffff;">0</span>
<span class="t" style="left:1256px;top:151.6px;font-size:12px;letter-spacing:-0.67px;color:#e8e8e8;">%</span>
<div class="a" style="left:1036px;top:205px;width:229px;height:15px;border:1px solid #2a2a2a;background:linear-gradient(rgba(255,255,255,.95) 0%,rgba(255,255,255,0) 48%,rgba(0,0,0,0) 52%,rgba(0,0,0,.95) 100%),linear-gradient(90deg,#ff0000 0%,#ffa000 9%,#ffff00 17%,#30d000 27%,#00a040 36%,#00c8c8 47%,#20a0ff 52%,#2020e0 62%,#8000c0 70%,#ff00c0 80%,#ff2060 88%,#ff0000 96%)"></div>
<div class="a" style="left:1255px;top:206px;width:9px;height:7px;background:#fff"></div>
<div class="a" style="left:1255px;top:213px;width:9px;height:6px;background:#000"></div>
<div class="a" style="left:1033px;top:227px;width:247px;height:2px;background:#262626"></div>

<!-- ===== Adjustments panel ===== -->
<div class="phead" style="top:229px"></div>
<div class="pbody" style="top:246px;height:119px"></div>
<div class="ptab" style="left:1033px;top:229px;width:85px;background:#4a4a4a;height:18px;border-top:1px solid #5c5c5c"></div>
<div class="ptab" style="left:1118px;top:229px;width:47px;background:#3c3c3c;border-top:1px solid #4c4c4c"></div>
<span class="t" style="left:1040.5px;top:233.2px;font-size:12.5px;letter-spacing:-0.52px;font-weight:bold;color:#ffffff;">Adjustments</span>
<span class="t" style="left:1125px;top:233.2px;font-size:12.5px;letter-spacing:-0.77px;font-weight:bold;color:#b9b9b9;">Styles</span>
<svg style="left:1261px;top:234px" width="15" height="9" viewBox="0 0 15 9"><path d="M0 1.500h5L2.500 5z" fill="#e2e2e2"/><path d="M6.500 0h8v1.500h-8zM6.500 2.500h8V4h-8zM6.500 5h8v1.500h-8zM6.500 7.500h8V9h-8z" fill="#8d8d8d"/></svg>
<span class="t" style="left:1041px;top:256.6px;font-size:13px;letter-spacing:0.03px;font-weight:bold;color:#ffffff;">Add an adjustment</span>
<svg style="left:0;top:0" width="1280" height="720" viewBox="0 0 1280 720">
<defs><linearGradient id="agv" x1="0" y1="0" x2="0" y2="1"><stop offset="0" stop-color="#ffffff"/><stop offset="1" stop-color="#9a9a9a"/></linearGradient>
<linearGradient id="agh"><stop offset="0" stop-color="#ffffff"/><stop offset="1" stop-color="#555"/></linearGradient>
<linearGradient id="agd" x1="0" y1="0" x2="1" y2="1"><stop offset="0" stop-color="#5a5a5a"/><stop offset=".5" stop-color="#e8e8e8"/><stop offset="1" stop-color="#5a5a5a"/></linearGradient></defs>
<g transform="translate(1091.5,290)"><circle r="3.800" fill="#f2f2f2"/><path d="M0 -3.800a3.800 3.800 0 0 0 0 7.600z" fill="#3a3a3a"/><path d="M0 -5.200V-7.800" transform="rotate(0)" stroke="#f2f2f2" stroke-width="1.600"/><path d="M0 -5.200V-7.800" transform="rotate(45)" stroke="#f2f2f2" stroke-width="1.600"/><path d="M0 -5.200V-7.800" transform="rotate(90)" stroke="#f2f2f2" stroke-width="1.600"/><path d="M0 -5.200V-7.800" transform="rotate(135)" stroke="#f2f2f2" stroke-width="1.600"/><path d="M0 -5.200V-7.800" transform="rotate(180)" stroke="#f2f2f2" stroke-width="1.600"/><path d="M0 -5.200V-7.800" transform="rotate(225)" stroke="#f2f2f2" stroke-width="1.600"/><path d="M0 -5.200V-7.800" transform="rotate(270)" stroke="#f2f2f2" stroke-width="1.600"/><path d="M0 -5.200V-7.800" transform="rotate(315)" stroke="#f2f2f2" stroke-width="1.600"/></g>
<g transform="translate(1107.8,282)" fill="#efefef"><path d="M0 14V8l1.500-3 1.500 4 1-6 1.500 5 1-8 1.500 7 1.500-9 1.500 8 1.500-6 1.500 5 1-3 1.500 3 1 0v7z"/></g>
<g transform="translate(1131.9,283.0)"><rect x="0.700" y="0.700" width="15.600" height="12.600" fill="#3c3c3c" stroke="#eeeeee" stroke-width="1.500"/><path d="M1 4.800h15M1 9.200h15M6 1v12M11 1v12" stroke="#bdbdbd" stroke-width="1"/><path d="M2 12.500C7 12 9 2.500 15.500 1.500" stroke="#fff" stroke-width="1.600" fill="none"/></g>
<g transform="translate(1155.9,283.0)"><rect x="0.700" y="0.700" width="15.600" height="12.600" fill="#3c3c3c" stroke="#eeeeee" stroke-width="1.500"/><path d="M1.500 12.500L15.500 1.500V12.500z" fill="#e8e8e8"/><path d="M3.500 4.500h4M5.500 2.500v4" stroke="#f4f4f4" stroke-width="1.200"/><path d="M10 10.200h4" stroke="#3a3a3a" stroke-width="1.300"/></g>
<g transform="translate(1188.2,290)"><path d="M-7.500 -6.500h15L0 7z" fill="url(#agv)" stroke="#f2f2f2" stroke-width="1.600" stroke-linejoin="round"/></g>
<g transform="translate(1071.9,310.0)"><rect x="0.700" y="0.700" width="15.600" height="12.600" fill="#3c3c3c" stroke="#eeeeee" stroke-width="1.500"/><rect x="1.500" y="7" width="14" height="5.500" fill="url(#agh)"/><path d="M3 2.500h2.500v2.500H3zM7.500 2.500H10v2.500H7.500zM12 2.500h2v2.500h-2z" fill="#dcdcdc"/></g>
<g transform="translate(1103.8,318)" fill="none" stroke="#efefef" stroke-width="1.500"><path d="M-6.500 -4.500h13M0 -7v3"/><path d="M-6.500 -4.500l-2 7.500h4zM6.500 -4.500l-2 7.500h4z" fill="#efefef" stroke-width="1"/><path d="M-8.500 3.500a2.200 2.200 0 0 0 4.200 0zM4.300 3.500a2.200 2.200 0 0 0 4.200 0z" fill="#efefef" stroke="none"/><circle cx="0" cy="-5.500" r="1.600" fill="#efefef" stroke="none"/></g>
<g transform="translate(1119.7,310.0)"><rect x="0.700" y="0.700" width="15.600" height="12.600" fill="#3c3c3c" stroke="#eeeeee" stroke-width="1.500"/><rect x="1.500" y="1.500" width="6.500" height="11" fill="#2c2c2c"/><rect x="8" y="1.500" width="7.500" height="11" fill="url(#agh)"/></g>
<g transform="translate(1152.0,317)"><path d="M-8 -5h3l1-1.800h5l1 1.800h3v9h-13z" fill="#ececec"/><circle cx="-1.500" cy="-.5" r="2.800" fill="none" stroke="#4a4a4a" stroke-width="1.300"/><circle cx="3.800" cy="3" r="4.500" fill="#bdbdbd" stroke="#f4f4f4" stroke-width="1.400"/><path d="M1.500 3h4.600" stroke="#4a4a4a" stroke-width="1.200"/></g>
<g transform="translate(1176.0,317)" stroke="#f4f4f4" stroke-width="1.400"><circle cx="0" cy="-2.800" r="4" fill="#dedede"/><circle cx="-3.300" cy="2.600" r="4" fill="#c4c4c4"/><circle cx="3.300" cy="2.600" r="4" fill="#aaaaaa"/><path d="M0 0v3M0 0l-2.500-1.500M0 0l2.500-1.500" stroke="#333" stroke-width="1.200"/></g>
<g transform="translate(1191.8,310.0)"><rect x="0.700" y="0.700" width="15.600" height="12.600" fill="#3c3c3c" stroke="#eeeeee" stroke-width="1.500"/><path d="M1 5h15M1 9h15M6 1v12M11 1v12" stroke="#eeeeee" stroke-width="1.500"/></g>
<g transform="translate(1084.0,337.0)"><rect x="0.700" y="0.700" width="15.600" height="12.600" fill="#3c3c3c" stroke="#eeeeee" stroke-width="1.500"/><rect x="1.500" y="1.500" width="14" height="11" fill="#d8d8d8"/><path d="M3 12C5 7 9 9 13.500 2" stroke="#1e1e1e" stroke-width="2.200" fill="none"/><circle cx="8.500" cy="7" r="2" fill="#1e1e1e"/></g>
<g transform="translate(1107.8,337.0)"><rect x="0.700" y="0.700" width="15.600" height="12.600" fill="#3c3c3c" stroke="#eeeeee" stroke-width="1.500"/><rect x="1.500" y="1.500" width="14" height="11" fill="url(#agd)"/></g>
<g transform="translate(1131.9,337.0)"><rect x="0.700" y="0.700" width="15.600" height="12.600" fill="#3c3c3c" stroke="#eeeeee" stroke-width="1.500"/><rect x="1.500" y="1.500" width="14" height="11" fill="#dcdcdc"/><path d="M1.500 11l3-.5 1.500-3 3-.5 1.500-3 3-.5 2-2" stroke="#1e1e1e" stroke-width="2" fill="none"/></g>
<g transform="translate(1155.9,337.0)"><rect x="0.700" y="0.700" width="15.600" height="12.600" fill="#3c3c3c" stroke="#eeeeee" stroke-width="1.500"/><rect x="1.500" y="1.500" width="14" height="11" fill="#bdbdbd"/><path d="M1.500 1.500l14 11M15.500 1.500l-14 11" stroke="#f4f4f4" stroke-width="1.400"/><path d="M1.500 1.500L8.500 7l-7 5.500zM15.500 1.500L8.500 7l7 5.500z" fill="#6a6a6a"/></g>
<g transform="translate(1179.7,337.0)"><rect x="0.700" y="0.700" width="15.600" height="12.600" fill="#3c3c3c" stroke="#eeeeee" stroke-width="1.500"/><rect x="1.500" y="1.500" width="14" height="11" fill="url(#agh)"/></g>
</svg>
<div class="a" style="left:1033px;top:365px;width:247px;height:2px;background:#262626"></div>

<!-- ===== Layers panel ===== -->
<div class="phead" style="top:367px"></div>
<div class="pbody" style="top:384px;height:332px"></div>
<div class="ptab" style="left:1033px;top:367px;width:50px;background:#4a4a4a;height:18px;border-top:1px solid #5c5c5c"></div>
<div class="ptab" style="left:1083px;top:367px;width:65px;background:#3c3c3c;border-top:1px solid #4c4c4c"></div>
<div class="ptab" style="left:1148px;top:367px;width:45px;background:#3c3c3c;border-top:1px solid #4c4c4c"></div>
<span class="t" style="left:1040px;top:371.2px;font-size:12.5px;letter-spacing:-0.66px;font-weight:bold;color:#ffffff;">Layers</span>
<span class="t" style="left:1090px;top:371.2px;font-size:12.5px;letter-spacing:-0.61px;font-weight:bold;color:#b9b9b9;">Channels</span>
<span class="t" style="left:1156px;top:371.2px;font-size:12.5px;letter-spacing:-0.76px;font-weight:bold;color:#b9b9b9;">Paths</span>
<svg style="left:1261px;top:372px" width="15" height="9" viewBox="0 0 15 9"><path d="M0 1.500h5L2.500 5z" fill="#e2e2e2"/><path d="M6.500 0h8v9h-8z" fill="#a9a9a9"/></svg>
<!-- kind row -->
<div class="dd" style="left:1038px;top:389px;width:80px;height:20px"></div>
<svg style="left:1044px;top:392px" width="13" height="13" viewBox="0 0 13 13" fill="none" stroke="#f0f0f0" stroke-width="1.800"><circle cx="7.800" cy="5.200" r="3.600"/><path d="M5.200 7.800L1 12" stroke-width="2.200"/></svg>
<span class="t" style="left:1058px;top:392.1px;font-size:13px;letter-spacing:0.16px;color:#f4f4f4;text-shadow:0 0 .5px #f4f4f4">Kind</span>
<svg style="left:1108px;top:394px" width="6" height="10" viewBox="0 0 6 10" fill="#e8e8e8"><path d="M3 0L6 3.800H0zM3 10L0 6.200h6z"/></svg>
<svg style="left:1135px;top:389px" width="120" height="20" viewBox="0 0 120 20" fill="#ececec">
  <rect x="3" y="4.500" width="12.500" height="10.500" fill="none" stroke="#ececec" stroke-width="1.500"/><path d="M4.500 13.500l3-4 2.200 2.200 1.800-1.800 2.300 3.600z"/><circle cx="11.500" cy="7.500" r="1.100"/>
  <circle cx="32.300" cy="9.500" r="5" fill="none" stroke="#ececec" stroke-width="1.600"/><path d="M28.800 13a5 5 0 0 0 7-7z"/>
  <text x="56" y="15" text-anchor="middle" font-family="'Liberation Serif','DejaVu Serif',serif" font-size="16" font-weight="bold" fill="#ececec">T</text>
  <path d="M76.500 6h8v7.500h-8z" fill="none" stroke="#ececec" stroke-width="1.500"/><rect x="74.500" y="4" width="3.400" height="3.400"/><rect x="83" y="4" width="3.400" height="3.400"/><rect x="74.500" y="12" width="3.400" height="3.400"/><rect x="83" y="12" width="3.400" height="3.400"/>
  <path d="M99.500 8.500h6.500v7.500h-6.500z" opacity=".9"/><path d="M102.500 4h6l2 2V13.500h-8z" fill="#4a4a4a" stroke="#ececec" stroke-width="1.400"/><path d="M105 8.500h1.800v4H105z"/>
</svg>
<div class="a" style="left:1267px;top:390px;width:9px;height:17px;background:linear-gradient(#8a8a8a 0,#8a8a8a 40%,#2e2e2e 40%,#2e2e2e 100%);border:1px solid #2a2a2a;border-radius:2px"></div>
<div class="a" style="left:1033px;top:411px;width:247px;height:1px;background:#3a3a3a"></div>
<!-- blend row -->
<div class="dd" style="left:1038px;top:417px;width:122px;height:19px"></div>
<span class="t" style="left:1044px;top:420.1px;font-size:13px;letter-spacing:0.22px;color:#f4f4f4;text-shadow:0 0 .5px #f4f4f4">Normal</span>
<svg style="left:1150px;top:422px" width="6" height="10" viewBox="0 0 6 10" fill="#e8e8e8"><path d="M3 0L6 3.800H0zM3 10L0 6.200h6z"/></svg>
<span class="t" style="left:1164px;top:420.1px;font-size:13px;letter-spacing:-0.03px;color:#f4f4f4;text-shadow:0 0 .5px #f4f4f4">Opacity:</span>
<div class="numbox" style="left:1215px;top:417px;width:40px;height:19px"></div>
<span class="t" style="left:1220px;top:420.1px;font-size:13px;letter-spacing:-0.75px;color:#ffffff;">100%</span>
<div class="ddbtn" style="left:1255px;top:417px;width:20px;height:19px"></div>
<svg style="left:1262px;top:425px" width="6" height="4" viewBox="0 0 6 4"><path d="M0 0h6L3 3.800z" fill="#ececec"/></svg>
<!-- lock row -->
<span class="t" style="left:1038px;top:449.1px;font-size:13px;letter-spacing:-0.27px;color:#f4f4f4;text-shadow:0 0 .5px #f4f4f4">Lock:</span>
<svg style="left:1074px;top:446px" width="84" height="19" viewBox="0 0 84 19" fill="#ececec">
  <rect x="1.500" y="3.500" width="11.500" height="11.500" fill="none" stroke="#ececec" stroke-width="1.300"/><path d="M2 4h3.500v3.500H2zM9 4h3.500v3.500H9zM5.500 7.500H9V11H5.500zM2 11h3.500v3.500H2zM9 11h3.500v3.500H9z"/>
  <path d="M35 1l1.800 1.200-7 9.300-2.500-1.800z"/><path d="M26.500 10.500l2.500 1.800c-.8 2.400-3.400 3.600-6.800 3.200 1.900-1 2.700-2.800 4.300-5z"/>
  <path d="M51 2l2.800 3h-1.900v3.500h3.500V6.700l3 2.800-3 2.800v-1.800h-3.500V14h1.900L51 17l-2.800-3h1.900v-3.500h-3.500v1.800l-3-2.800 3-2.800v1.800h3.500V5h-1.900z"/>
  <path d="M69.500 8V6a3.500 3.500 0 0 1 7 0v2" fill="none" stroke="#ececec" stroke-width="1.800"/><rect x="67.500" y="8" width="11" height="8.500" rx="1"/><rect x="72.200" y="10.500" width="1.600" height="3.500" fill="#4a4a4a"/>
</svg>
<span class="t" style="left:1192px;top:449.1px;font-size:13px;letter-spacing:-0.18px;color:#f4f4f4;text-shadow:0 0 .5px #f4f4f4">Fill:</span>
<div class="numbox" style="left:1215px;top:445px;width:40px;height:19px"></div>
<span class="t" style="left:1220px;top:448.6px;font-size:13px;letter-spacing:-0.75px;color:#ffffff;">100%</span>
<div class="ddbtn" style="left:1255px;top:445px;width:20px;height:19px"></div>
<svg style="left:1262px;top:453px" width="6" height="4" viewBox="0 0 6 4"><path d="M0 0h6L3 3.800z" fill="#ececec"/></svg>
<!-- layer list -->
<div class="a" style="left:1033px;top:469px;width:247px;height:228px;background:#3b3b3b;border-top:1px solid #2a2a2a"></div>
<div class="a" style="left:1264px;top:470px;width:16px;height:227px;background:#424242;border-left:1px solid #2c2c2c"></div>
<div class="a" style="left:1033px;top:470px;width:31px;height:120px;background:#4a4a4a;border-right:1px solid #2e2e2e"></div>
<div class="a" style="left:1064px;top:470px;width:200px;height:59px;background:#5d7391"></div>
<div class="a" style="left:1064px;top:530px;width:200px;height:59px;background:#4a4a4a"></div>
<div class="a" style="left:1033px;top:529px;width:231px;height:1px;background:#2e2e2e"></div>
<div class="a" style="left:1033px;top:589px;width:231px;height:1px;background:#2e2e2e"></div>
<!-- layer thumb (photo) -->
<div class="a" style="left:1067px;top:474px;width:80px;height:53px;background:linear-gradient(100deg,#2e2a48 0%,#5a4660 16%,#a8a0aa 34%,#d4cec8 58%,#cfc4ba 100%);border:1px solid #dcdcdc"></div><div class="a" style="left:1096px;top:476px;width:5px;height:9px;background:#f4f2f0;border-radius:2px"></div><div class="a" style="left:1074px;top:476px;width:8px;height:6px;background:#b06a8a;opacity:.7;border-radius:3px"></div>
<!-- mask thumb -->
<svg style="left:1160px;top:471px" width="84" height="57" viewBox="0 0 84 57"><rect x="1" y="1" width="82" height="55" fill="#000" stroke="#fff" stroke-width="2"/><path d="M28 56V22C27 14 30 6 33 4.500 36 5 38 8 40 10 46 11 51 11 56 13 60 15 62 18 65 20 71 23 77 25 83 26.500V56z" fill="#fff"/></svg>
<div class="a" style="left:1160px;top:535px;width:84px;height:53px;background:#fdfdfd"></div>
<svg style="left:1252px;top:505px" width="9" height="3" viewBox="0 0 9 3" fill="#f0f0f0"><rect width="2" height="2"/><rect x="3.500" width="2" height="2"/><rect x="7" width="2" height="2"/></svg>
<svg style="left:1252px;top:566px" width="9" height="3" viewBox="0 0 9 3" fill="#f0f0f0"><rect width="2" height="2"/><rect x="3.500" width="2" height="2"/><rect x="7" width="2" height="2"/></svg>
<!-- bottom icon bar -->
<div class="a" style="left:1033px;top:697px;width:247px;height:19px;background:#484848;border-top:1px solid #2c2c2c"></div>
<svg style="left:1070px;top:698px" width="190" height="18" viewBox="0 0 190 18" fill="#d6d6d6">
  <g fill="none" stroke="#a8a8a8" stroke-width="1.600"><rect x="6.500" y="7" width="8" height="5.500" rx="2.750"/><rect x="11.500" y="7" width="8" height="5.500" rx="2.750"/></g>
  <text x="33.500" y="14.500" font-family="'Liberation Serif','DejaVu Serif',serif" font-style="italic" font-size="14.500" fill="#e4e4e4">fx</text><path d="M46.500 13.500h3.400l-1.700 2.200z"/>
  <rect x="61" y="5" width="13" height="10"/><circle cx="67.500" cy="10" r="2.700" fill="#484848"/>
  <circle cx="94.500" cy="10" r="4.700" fill="none" stroke="#d6d6d6" stroke-width="1.500"/><path d="M91.200 13.300a4.700 4.700 0 0 0 6.600-6.600z"/><path d="M100.500 13.500h3.400l-1.700 2.200z"/>
  <path d="M115 5.500h4.500l1.300 1.800h6.700v7.700H115z"/>
  <path d="M144.500 4.500h9v9h-2.500v2.500h-6.500l-2.500-2.500V7h2.500z"/><path d="M144.500 13.500v2.500l-2.500-2.500z" fill="#484848"/>
  <path d="M170.500 8h9.500l-.9 8h-7.700zM169.200 5.800h12.100v1.400h-12.100zM173.500 4.200h3.500v1.400h-3.500z"/><path d="M173 9.500v5M175.200 9.500v5M177.400 9.500v5" stroke="#484848" stroke-width=".9"/>
</svg>
<!-- ===== context menu ===== -->
<div class="a" style="left:990px;top:483px;width:227px;height:200px;background:#f3f3f3;border-radius:5px;box-shadow:0 4px 12px rgba(0,0,0,.55),0 0 0 1px rgba(0,0,0,.25)"></div>
<div class="a" style="left:990px;top:512px;width:227px;height:1px;background:#dadada"></div>
<div class="a" style="left:990px;top:559px;width:227px;height:1px;background:#dadada"></div>
<div class="a" style="left:990px;top:624px;width:227px;height:1px;background:#dadada"></div>
<div class="a" style="left:990px;top:654px;width:227px;height:1px;background:#dadada"></div>
<div class="a" style="left:990px;top:535px;width:227px;height:17px;background:linear-gradient(#4f7fee,#1d50d8);border-top:1px solid #3f6fe0;border-bottom:1px solid #1541c0"></div>
<span class="t" style="left:1011px;top:487.7px;font-size:14px;letter-spacing:-0.14px;color:#101010;">Disable Layer Mask</span>
<span class="t" style="left:1011px;top:517.7px;font-size:14px;letter-spacing:-0.17px;color:#101010;">Delete Layer Mask</span>
<span class="t" style="left:1011px;top:536.2px;font-size:14px;letter-spacing:-0.09px;color:#ffffff;">Apply Layer Mask</span>
<span class="t" style="left:1011px;top:566.2px;font-size:14px;letter-spacing:0.02px;color:#101010;">Add Mask To Selection</span>
<span class="t" style="left:1011px;top:584.2px;font-size:14px;letter-spacing:-0.07px;color:#101010;">Subtract Mask From Selection</span>
<span class="t" style="left:1011px;top:602.2px;font-size:14px;letter-spacing:-0.01px;color:#101010;">Intersect Mask With Selection</span>
<span class="t" style="left:1011px;top:632.2px;font-size:14px;letter-spacing:-0.11px;color:#101010;">Refine Mask...</span>
<span class="t" style="left:1011px;top:662.2px;font-size:14px;letter-spacing:0.09px;color:#101010;">Mask Options...</span>
<!-- mouse cursor -->
<svg style="left:1157px;top:536px" width="13" height="20" viewBox="0 0 13 20"><path d="M1 1v14.500l3.400-3.200 2.400 5.700 2.400-1-2.400-5.600H11.500z" fill="#111" stroke="#fff" stroke-width="1.300" stroke-linejoin="round"/></svg>
</body>
</html>
